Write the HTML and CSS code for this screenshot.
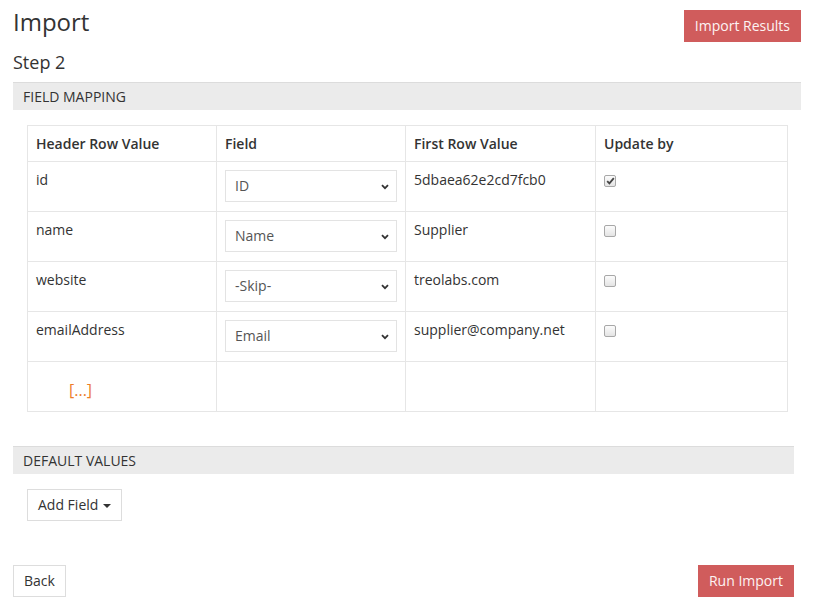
FILE: index.html
```html
<!DOCTYPE html>
<html>
<head>
<meta charset="utf-8">
<link rel="stylesheet" href="styles.css">
</head>
<body>
<div class="page">
  <div class="page-header">
    <h1 class="title">Import</h1>
    <button class="btn btn-danger btn-results">Import Results</button>
  </div>
  <h2 class="step">Step 2</h2>

  <div class="panel">
    <div class="panel-heading">FIELD MAPPING</div>
    <div class="panel-body">
      <table class="mapping">
        <colgroup>
          <col class="c1"><col class="c2"><col class="c3"><col class="c4">
        </colgroup>
        <thead>
          <tr><th>Header Row Value</th><th>Field</th><th>First Row Value</th><th>Update by</th></tr>
        </thead>
        <tbody>
          <tr>
            <td>id</td>
            <td><div class="select"><span>ID</span><svg class="chev" width="8" height="6" viewBox="0 0 8 6"><path d="M1 1.2 L4 4.2 L7 1.2" fill="none" stroke="#333" stroke-width="1.8"/></svg></div></td>
            <td>5dbaea62e2cd7fcb0</td>
            <td><span class="check checked"><svg width="9" height="8" viewBox="0 0 9 8"><path d="M1.2 4.2 L3.4 6.4 L7.8 1.2" fill="none" stroke="#444" stroke-width="1.8"/></svg></span></td>
          </tr>
          <tr>
            <td>name</td>
            <td><div class="select"><span>Name</span><svg class="chev" width="8" height="6" viewBox="0 0 8 6"><path d="M1 1.2 L4 4.2 L7 1.2" fill="none" stroke="#333" stroke-width="1.8"/></svg></div></td>
            <td>Supplier</td>
            <td><span class="check"></span></td>
          </tr>
          <tr>
            <td>website</td>
            <td><div class="select"><span>-Skip-</span><svg class="chev" width="8" height="6" viewBox="0 0 8 6"><path d="M1 1.2 L4 4.2 L7 1.2" fill="none" stroke="#333" stroke-width="1.8"/></svg></div></td>
            <td>treolabs.com</td>
            <td><span class="check"></span></td>
          </tr>
          <tr>
            <td>emailAddress</td>
            <td><div class="select"><span>Email</span><svg class="chev" width="8" height="6" viewBox="0 0 8 6"><path d="M1 1.2 L4 4.2 L7 1.2" fill="none" stroke="#333" stroke-width="1.8"/></svg></div></td>
            <td>supplier@company.net</td>
            <td><span class="check"></span></td>
          </tr>
          <tr class="more-row">
            <td><span class="more">[...]</span></td>
            <td><div class="spacer"></div></td>
            <td></td>
            <td></td>
          </tr>
        </tbody>
      </table>
    </div>
  </div>

  <div class="panel panel-narrow">
    <div class="panel-heading">DEFAULT VALUES</div>
    <div class="panel-body">
      <button class="btn btn-default btn-add">Add Field <span class="caret"></span></button>
    </div>
  </div>

  <div class="footer">
    <button class="btn btn-default">Back</button>
    <button class="btn btn-danger">Run Import</button>
  </div>
</div>
</body>
</html>
```

FILE: styles.css
```css
* { box-sizing: border-box; }
html, body {
  margin: 0;
  padding: 0;
  background: #fff;
}
body {
  font-family: "Open Sans", "DejaVu Sans", sans-serif;
  font-size: 14px;
  line-height: 20px;
  color: #333;
}
.page {
  padding: 6px 14px 0 13px;
}
.page-header {
  display: flex;
  justify-content: space-between;
  align-items: flex-start;
}
.title {
  margin: 0;
  font-size: 24px;
  font-weight: 400;
  line-height: 32px;
}
.btn {
  font-family: "Open Sans", "DejaVu Sans", sans-serif;
  font-size: 14px;
  line-height: 20px;
  height: 32px;
  padding: 5px 10px;
  border: 1px solid #ddd;
  border-radius: 0;
  background: #fff;
  color: #333;
  cursor: pointer;
}
.btn-danger {
  background: #d05c5c;
  border-color: #d05c5c;
  color: #fdf3f3;
}
.btn-results {
  margin-top: 4px;
}
.step {
  margin: 8px 0 0 0;
  font-size: 18px;
  font-weight: 400;
  line-height: 24px;
}
.panel {
  margin-top: 8px;
}
.panel-heading {
  height: 28px;
  border-top: 1px solid #dcdcdc;
  background: #ebebeb;
  font-size: 14px;
  line-height: 27px;
  padding-left: 10px;
  color: #333;
}
.panel-body {
  padding: 15px 14px 0 14px;
}
.mapping {
  width: 760px;
  border-collapse: collapse;
  table-layout: fixed;
}
.c1 { width: 189px; }
.c2 { width: 189px; }
.c3 { width: 190px; }
.c4 { width: 192px; }
.mapping th,
.mapping td {
  border: 1px solid #e6e6e6;
  text-align: left;
  vertical-align: top;
  padding: 8px 8px 9px 8px;
}
.mapping th {
  font-weight: 600;
  padding-bottom: 7px;
}
.select {
  height: 32px;
  border: 1px solid #e3e3e3;
  display: flex;
  align-items: center;
  justify-content: space-between;
  padding: 0 7px 0 9px;
  color: #555;
}
.chev { display: block; margin-top: 1px; }
.check {
  display: inline-flex;
  align-items: center;
  justify-content: center;
  width: 12px;
  height: 12px;
  margin-top: 5px;
  border: 1px solid #a8a8a8;
  border-radius: 2px;
  background: linear-gradient(#fcfcfc, #e4e4e4);
  vertical-align: top;
}
.check svg { display: block; }
.spacer { height: 32px; }
.more-row td:first-child { padding-left: 41px; }
.more {
  display: inline-block;
  margin-top: 10px;
  color: #ed7d2b;
  font-size: 16px;
}
.panel-narrow {
  margin-top: 34px;
  margin-right: 7px;
}
.btn-add {
  padding: 5px 10px;
}
.caret {
  display: inline-block;
  width: 0;
  height: 0;
  margin-left: 1px;
  vertical-align: middle;
  border-top: 4px solid #333;
  border-left: 4px solid transparent;
  border-right: 4px solid transparent;
}
.footer {
  display: flex;
  justify-content: space-between;
  margin-top: 44px;
  margin-right: 7px;
}
```
